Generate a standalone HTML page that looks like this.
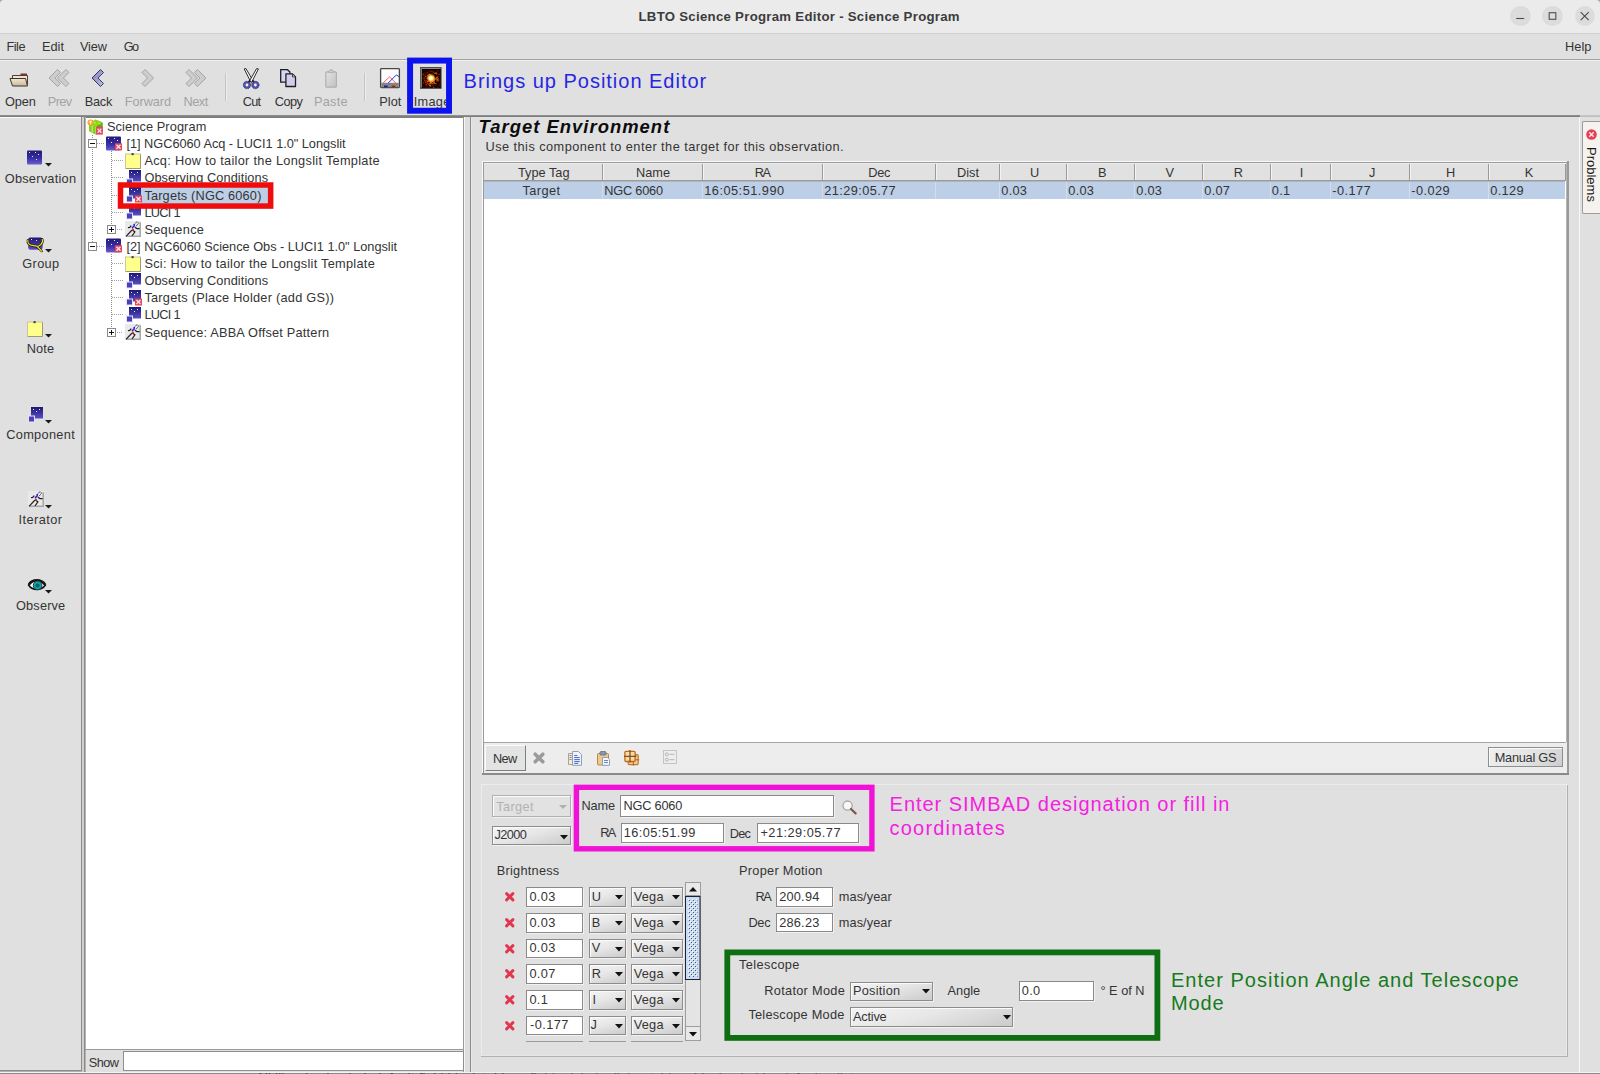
<!DOCTYPE html>
<html><head><meta charset="utf-8"><title>LBTO Science Program Editor - Science Program</title>
<style>
html,body{margin:0;padding:0;}
body{width:1600px;height:1074px;overflow:hidden;position:relative;background:#e0e0e0;font-family:"Liberation Sans",sans-serif;}
div,span.t,svg.i{position:absolute;box-sizing:border-box;}
span.t{white-space:pre;display:block;}
svg.i{overflow:visible;}
.fld{background:#fff;border:1px solid #8a8a8a;box-shadow:1px 1px 0 #f2f2f2;}
.cmb{border:1px solid #8c8c8c;background:linear-gradient(165deg,#f4f4f4,#e7e7e7 45%,#cbcbcb);box-shadow:1px 1px 0 #f2f2f2,inset 1px 1px 0 #fbfbfb;}
.btn{border:1px solid #8e8e8e;box-shadow:inset 1px 1px 0 #fafafa;background:linear-gradient(135deg,#efefef,#e4e4e4 55%,#cdcdcd);}
</style></head><body>
<div style="left:0px;top:0px;width:1600px;height:33px;background:#ebebeb;"></div>
<div style="left:0px;top:33px;width:1600px;height:1px;background:#d0d0d0;"></div>
<span class="t" style="left:638.50px;top:8.13px;font-size:13.2px;line-height:18px;letter-spacing:0.291px;color:#3c3c3c;font-weight:bold;">LBTO Science Program Editor - Science Program</span>
<div style="left:1510.0px;top:5.75px;width:20.5px;height:20.5px;border-radius:50%;background:#dcdcdc"></div>
<div style="left:1542.25px;top:5.75px;width:20.5px;height:20.5px;border-radius:50%;background:#dcdcdc"></div>
<div style="left:1574.5px;top:5.75px;width:20.5px;height:20.5px;border-radius:50%;background:#dcdcdc"></div>
<svg class="i" style="left:1510px;top:6px;" width="80" height="20" viewBox="0 0 80 20"><path d="M6.2 12.5h8" stroke="#4e4e4e" stroke-width="1.1"/>
<rect x="39.2" y="6.7" width="6.6" height="6.6" fill="none" stroke="#4e4e4e" stroke-width="1.1"/>
<path d="M70.7 6.2l8 8m0-8l-8 8" stroke="#4e4e4e" stroke-width="1.2"/></svg>
<svg class="i" style="left:0px;top:0px;" width="4" height="4" viewBox="0 0 4 4"><path d="M0 0h3.5A3.5 3.5 0 0 0 0 3.5z" fill="#9a9a98"/></svg>
<svg class="i" style="left:1596px;top:0px;" width="4" height="4" viewBox="0 0 4 4"><path d="M4 0h-3.5A3.5 3.5 0 0 1 4 3.5z" fill="#9a9a98"/></svg>
<div style="left:0px;top:34px;width:1600px;height:25px;background:#e0e0e0;"></div>
<div style="left:0px;top:59px;width:1600px;height:1px;background:#a2a2a2;"></div>
<div style="left:0px;top:60px;width:1600px;height:1px;background:#f0f0f0;"></div>
<span class="t" style="left:6.50px;top:38.28px;font-size:12.75px;line-height:18px;letter-spacing:-0.500px;color:#343434;">File</span>
<span class="t" style="left:42.00px;top:38.28px;font-size:12.75px;line-height:18px;letter-spacing:0.000px;color:#343434;">Edit</span>
<span class="t" style="left:80.00px;top:38.28px;font-size:12.75px;line-height:18px;letter-spacing:-0.167px;color:#343434;">View</span>
<span class="t" style="left:123.80px;top:38.28px;font-size:12.75px;line-height:18px;letter-spacing:-1.800px;color:#343434;">Go</span>
<span class="t" style="left:1565.00px;top:38.28px;font-size:12.75px;line-height:18px;letter-spacing:0.067px;color:#343434;">Help</span>
<svg class="i" style="left:8.6px;top:70.6px;" width="20" height="16" viewBox="0 0 20 16"><defs><linearGradient id="fo" x1="0" y1="0" x2="0" y2="1"><stop offset="0" stop-color="#f3e6d2"/><stop offset="1" stop-color="#cdb89a"/></linearGradient></defs>
<path d="M11.5 2.5h6.5v2h-6.5z" fill="#8e2b2b"/><path d="M3.5 4.5h15v9h-15z" fill="#efe4d2" stroke="#4a4038" stroke-width="1"/>
<path d="M1 7.5h15.5l2 7.5h-15z" fill="url(#fo)" stroke="#3c342c" stroke-width="1" stroke-linejoin="round"/></svg>
<svg class="i" style="left:48.1px;top:68.6px;" width="23" height="18" viewBox="0 0 23 18"><polygon points="9.5,0.5 12.5,3.5 7,9 12.5,14.5 9.5,17.5 1,9" fill="#cdcdcd" stroke="#a4a4a4" stroke-width="1" stroke-linejoin="miter"/><polygon points="17.9,0.5 20.9,3.5 15.4,9 20.9,14.5 17.9,17.5 9.4,9" fill="#cdcdcd" stroke="#a4a4a4" stroke-width="1" stroke-linejoin="miter"/></svg>
<svg class="i" style="left:90.9px;top:68.6px;" width="14" height="18" viewBox="0 0 14 18"><defs><linearGradient id="bk" x1="0" y1="0" x2="1" y2="1"><stop offset="0" stop-color="#7c7cba"/><stop offset="1" stop-color="#c0c0e6"/></linearGradient></defs><polygon points="9.5,0.5 12.5,3.5 7,9 12.5,14.5 9.5,17.5 1,9" fill="url(#bk)" stroke="#3a3a5c" stroke-width="1" stroke-linejoin="miter"/></svg>
<svg class="i" style="left:140.6px;top:68.6px;" width="14" height="18" viewBox="0 0 14 18"><polygon points="4.0,0.5 1.0,3.5 6.5,9 1.0,14.5 4.0,17.5 12.5,9" fill="#cdcdcd" stroke="#a4a4a4" stroke-width="1" stroke-linejoin="miter"/></svg>
<svg class="i" style="left:185.2px;top:68.6px;" width="23" height="18" viewBox="0 0 23 18"><polygon points="4.0,0.5 1.0,3.5 6.5,9 1.0,14.5 4.0,17.5 12.5,9" fill="#cdcdcd" stroke="#a4a4a4" stroke-width="1" stroke-linejoin="miter"/><polygon points="12.4,0.5 9.4,3.5 14.9,9 9.4,14.5 12.4,17.5 20.9,9" fill="#cdcdcd" stroke="#a4a4a4" stroke-width="1" stroke-linejoin="miter"/></svg>
<div style="left:225px;top:73px;width:1px;height:28px;background:#c4c4c4;"></div>
<div style="left:226px;top:73px;width:1px;height:28px;background:#ededed;"></div>
<svg class="i" style="left:243px;top:67.6px;" width="16.4" height="21" viewBox="0 0 16.4 21"><path d="M1.2 0.9L3 0.6L9.9 12.6L8 14.4z" fill="#fbfbfb" stroke="#161616" stroke-width="0.9" stroke-linejoin="round"/>
<path d="M15.4 0.9L13.6 0.6L6.7 12.6L8.6 14.4z" fill="#fbfbfb" stroke="#161616" stroke-width="0.9" stroke-linejoin="round"/>
<path d="M7.2 12.4L5.2 14.4M9.4 12.4L11.4 14.4" stroke="#161616" stroke-width="1.6"/>
<circle cx="4" cy="17" r="2.55" fill="#f2f2f6" stroke="#5252aa" stroke-width="2.3"/><circle cx="12.4" cy="17" r="2.55" fill="#f2f2f6" stroke="#5252aa" stroke-width="2.3"/>
<circle cx="4" cy="17" r="3.7" fill="none" stroke="#14143c" stroke-width="0.7" stroke-dasharray="1 0.8"/><circle cx="12.4" cy="17" r="3.7" fill="none" stroke="#14143c" stroke-width="0.7" stroke-dasharray="1 0.8"/></svg>
<svg class="i" style="left:280px;top:69px;" width="16" height="18.5" viewBox="0 0 16 18.5"><path d="M0.7 0.7h6.8l2.4 2.4v10h-9.2z" fill="#d7d7ee" stroke="#1e1e2a" stroke-width="1.3"/>
<path d="M5.9 4.9h6.6l3 3v9.6h-9.6z" fill="#cfcfea" stroke="#1e1e2a" stroke-width="1.3" stroke-linejoin="round"/><path d="M12.5 4.9v3h3z" fill="#f2f2fa" stroke="#1e1e2a" stroke-width="0.8"/></svg>
<svg class="i" style="left:325px;top:68px;" width="12" height="20" viewBox="0 0 12 20"><defs><linearGradient id="pg" x1="0" y1="0" x2="1" y2="1"><stop offset="0" stop-color="#e2e2e2"/><stop offset="1" stop-color="#c2c2c2"/></linearGradient></defs>
<rect x="0.8" y="3.8" width="10.6" height="15.4" rx="1" fill="url(#pg)" stroke="#b0b0b0" stroke-width="1.2"/>
<path d="M3 4.2c0-1.3 1.2-1.2 1.8-1.4 0-1.8 2.6-1.8 2.6 0 .6.2 1.8.1 1.8 1.4z" fill="#d8d8d8" stroke="#adadad" stroke-width="1"/></svg>
<div style="left:364px;top:73px;width:1px;height:28px;background:#c4c4c4;"></div>
<div style="left:365px;top:73px;width:1px;height:28px;background:#ededed;"></div>
<svg class="i" style="left:380px;top:68.1px;" width="20" height="20.2" viewBox="0 0 20 20.2"><rect x="0.6" y="0.6" width="18.8" height="19" rx="0.8" fill="#fdfdfd" stroke="#474747" stroke-width="1.3"/>
<rect x="1.2" y="14.8" width="17.6" height="4.4" fill="#858585"/>
<rect x="4" y="17.6" width="3.6" height="1.6" fill="#1414b4"/><rect x="11.8" y="17.6" width="3.4" height="1.6" fill="#c01414"/>
<path d="M3 15.2L9.5 8.8L16 15.2" stroke="#ff5a5a" stroke-width="1" fill="none"/>
<path d="M8 15.2L16.3 7L19 8.6" stroke="#2a2aff" stroke-width="1" fill="none"/></svg>
<svg class="i" style="left:420px;top:67.3px;" width="21.6" height="21.8" viewBox="0 0 21.6 21.8"><defs><radialGradient id="ig" cx="0.5" cy="0.5" r="0.5"><stop offset="0" stop-color="#ffffff"/><stop offset="0.35" stop-color="#fff4a8"/><stop offset="0.6" stop-color="#ffb020" stop-opacity="0.85"/><stop offset="1" stop-color="#c03806" stop-opacity="0"/></radialGradient></defs>
<rect x="0.5" y="0.5" width="20.6" height="20.8" fill="#100000" stroke="#4a4a4a" stroke-width="1"/><path d="M1.3 20.5V1.5H20.6" stroke="#8a8a8a" stroke-width="1.2" fill="none"/>
<rect x="9.9" y="12.2" width="1.1" height="1.1" fill="#fff"/><rect x="9.9" y="17.3" width="1.1" height="1.1" fill="#5a0c02"/><rect x="10.3" y="13.1" width="1.1" height="1.1" fill="#fff"/><rect x="7.3" y="4.1" width="1.1" height="1.1" fill="#2a0400"/><rect x="13.1" y="12.8" width="1.1" height="1.1" fill="#fff"/><rect x="13.4" y="13.1" width="1.1" height="1.1" fill="#ff9a18"/><rect x="16.6" y="3.6" width="1.1" height="1.1" fill="#3a0600"/><rect x="12.5" y="16.0" width="1.1" height="1.1" fill="#e84a08"/><rect x="16.7" y="11.5" width="1.1" height="1.1" fill="#e87a14"/><rect x="2.1" y="4.0" width="1.1" height="1.1" fill="#1a0200"/><rect x="19.5" y="19.7" width="1.1" height="1.1" fill="#2a0400"/><rect x="6.4" y="15.6" width="1.1" height="1.1" fill="#c83208"/><rect x="3.2" y="15.8" width="1.1" height="1.1" fill="#8a2006"/><rect x="8.8" y="19.1" width="1.1" height="1.1" fill="#6a1004"/><rect x="5.7" y="18.5" width="1.1" height="1.1" fill="#1a0200"/><rect x="19.2" y="9.4" width="1.1" height="1.1" fill="#2a0400"/><rect x="5.5" y="14.2" width="1.1" height="1.1" fill="#8a1a04"/><rect x="7.8" y="19.2" width="1.1" height="1.1" fill="#6a1004"/><rect x="4.4" y="14.7" width="1.1" height="1.1" fill="#1a0200"/><rect x="15.9" y="5.6" width="1.1" height="1.1" fill="#e87a14"/><rect x="10.9" y="19.5" width="1.1" height="1.1" fill="#1a0200"/><rect x="13.3" y="4.5" width="1.1" height="1.1" fill="#d84a0a"/><rect x="2.0" y="17.5" width="1.1" height="1.1" fill="#4a0802"/><rect x="7.3" y="17.8" width="1.1" height="1.1" fill="#1a0200"/><rect x="19.4" y="12.9" width="1.1" height="1.1" fill="#6a1004"/><rect x="19.3" y="6.2" width="1.1" height="1.1" fill="#4a0802"/><rect x="7.8" y="7.6" width="1.1" height="1.1" fill="#ff9a18"/><rect x="5.7" y="13.5" width="1.1" height="1.1" fill="#8a1a04"/><rect x="8.5" y="10.3" width="1.1" height="1.1" fill="#fff"/><rect x="16.6" y="4.8" width="1.1" height="1.1" fill="#2a0400"/><rect x="4.7" y="18.2" width="1.1" height="1.1" fill="#3a0600"/><rect x="14.7" y="5.2" width="1.1" height="1.1" fill="#5a0c02"/><rect x="5.4" y="18.9" width="1.1" height="1.1" fill="#4a0802"/><rect x="3.4" y="3.3" width="1.1" height="1.1" fill="#4a0802"/><rect x="18.8" y="6.6" width="1.1" height="1.1" fill="#8a2006"/><rect x="9.4" y="18.2" width="1.1" height="1.1" fill="#5a0c02"/><rect x="5.1" y="15.0" width="1.1" height="1.1" fill="#d84a0a"/><rect x="10.4" y="13.8" width="1.1" height="1.1" fill="#fff6b0"/><rect x="6.9" y="18.4" width="1.1" height="1.1" fill="#6a1004"/><rect x="3.2" y="9.6" width="1.1" height="1.1" fill="#6a1004"/><rect x="5.1" y="8.9" width="1.1" height="1.1" fill="#d84a0a"/><rect x="3.6" y="4.9" width="1.1" height="1.1" fill="#8a2006"/><rect x="13.5" y="14.5" width="1.1" height="1.1" fill="#ffb428"/><rect x="12.3" y="18.5" width="1.1" height="1.1" fill="#8a1a04"/><rect x="14.3" y="19.2" width="1.1" height="1.1" fill="#2a0400"/><rect x="3.3" y="3.7" width="1.1" height="1.1" fill="#3a0600"/><rect x="19.5" y="3.8" width="1.1" height="1.1" fill="#2a0400"/><rect x="2.8" y="18.7" width="1.1" height="1.1" fill="#3a0600"/><rect x="15.9" y="18.3" width="1.1" height="1.1" fill="#2a0400"/><rect x="10.3" y="3.8" width="1.1" height="1.1" fill="#c83208"/><rect x="17.1" y="12.4" width="1.1" height="1.1" fill="#e87a14"/><rect x="8.6" y="2.7" width="1.1" height="1.1" fill="#6a1004"/><rect x="13.2" y="19.7" width="1.1" height="1.1" fill="#b84a0c"/><rect x="7.8" y="18.7" width="1.1" height="1.1" fill="#1a0200"/><rect x="9.7" y="17.0" width="1.1" height="1.1" fill="#5a0c02"/><rect x="2.5" y="12.9" width="1.1" height="1.1" fill="#3a0600"/><rect x="18.8" y="4.5" width="1.1" height="1.1" fill="#2a0400"/><rect x="18.1" y="6.9" width="1.1" height="1.1" fill="#8a2006"/><rect x="4.5" y="13.1" width="1.1" height="1.1" fill="#8a1a04"/><rect x="13.5" y="10.1" width="1.1" height="1.1" fill="#ffd040"/><rect x="9.1" y="6.8" width="1.1" height="1.1" fill="#ffb428"/><rect x="17.4" y="9.2" width="1.1" height="1.1" fill="#8a1a04"/><rect x="5.7" y="4.8" width="1.1" height="1.1" fill="#6a1004"/><rect x="14.4" y="18.9" width="1.1" height="1.1" fill="#3a0600"/><rect x="4.0" y="10.7" width="1.1" height="1.1" fill="#e87a14"/><rect x="8.7" y="11.5" width="1.1" height="1.1" fill="#fff"/><rect x="7.6" y="16.8" width="1.1" height="1.1" fill="#5a0c02"/><rect x="2.7" y="14.8" width="1.1" height="1.1" fill="#8a2006"/><rect x="13.4" y="12.3" width="1.1" height="1.1" fill="#fff"/><rect x="10.0" y="2.9" width="1.1" height="1.1" fill="#3a0600"/><rect x="15.6" y="16.3" width="1.1" height="1.1" fill="#c83208"/><rect x="9.8" y="13.4" width="1.1" height="1.1" fill="#ffd040"/><rect x="18.8" y="14.3" width="1.1" height="1.1" fill="#1a0200"/><rect x="6.5" y="14.9" width="1.1" height="1.1" fill="#5a0c02"/><rect x="14.5" y="5.6" width="1.1" height="1.1" fill="#8a1a04"/><rect x="11.4" y="18.9" width="1.1" height="1.1" fill="#3a0600"/><rect x="8.9" y="16.2" width="1.1" height="1.1" fill="#c83208"/><rect x="9.2" y="17.9" width="1.1" height="1.1" fill="#e87a14"/><rect x="9.9" y="13.3" width="1.1" height="1.1" fill="#fff"/><rect x="11.6" y="13.8" width="1.1" height="1.1" fill="#ffd040"/><rect x="10.1" y="13.8" width="1.1" height="1.1" fill="#fff6b0"/><rect x="5.7" y="18.1" width="1.1" height="1.1" fill="#8a2006"/><rect x="11.4" y="16.2" width="1.1" height="1.1" fill="#ff9a18"/><rect x="8.1" y="3.9" width="1.1" height="1.1" fill="#4a0802"/><rect x="9.4" y="7.3" width="1.1" height="1.1" fill="#ffb428"/><rect x="16.2" y="3.6" width="1.1" height="1.1" fill="#3a0600"/><rect x="11.3" y="14.4" width="1.1" height="1.1" fill="#ffd040"/><rect x="4.6" y="11.4" width="1.1" height="1.1" fill="#7a1404"/><rect x="14.1" y="18.9" width="1.1" height="1.1" fill="#2a0400"/><rect x="3.5" y="6.3" width="1.1" height="1.1" fill="#8a2006"/><rect x="16.5" y="12.2" width="1.1" height="1.1" fill="#5a0c02"/><rect x="16.8" y="12.2" width="1.1" height="1.1" fill="#e87a14"/><rect x="18.7" y="17.6" width="1.1" height="1.1" fill="#8a2006"/><rect x="16.9" y="19.3" width="1.1" height="1.1" fill="#4a0802"/><rect x="10.7" y="9.6" width="1.1" height="1.1" fill="#fff6b0"/><rect x="12.6" y="3.0" width="1.1" height="1.1" fill="#4a0802"/><rect x="18.1" y="11.9" width="1.1" height="1.1" fill="#c83208"/><rect x="10.6" y="14.5" width="1.1" height="1.1" fill="#e84a08"/><rect x="10.0" y="18.4" width="1.1" height="1.1" fill="#e87a14"/><rect x="6.7" y="10.7" width="1.1" height="1.1" fill="#ffd040"/><rect x="17.8" y="18.7" width="1.1" height="1.1" fill="#4a0802"/><rect x="7.6" y="5.8" width="1.1" height="1.1" fill="#8a1a04"/><rect x="4.3" y="16.0" width="1.1" height="1.1" fill="#3a0600"/><rect x="4.7" y="2.7" width="1.1" height="1.1" fill="#2a0400"/><rect x="8.2" y="13.2" width="1.1" height="1.1" fill="#e84a08"/><rect x="4.1" y="11.3" width="1.1" height="1.1" fill="#d84a0a"/><rect x="14.3" y="17.7" width="1.1" height="1.1" fill="#7a1404"/><rect x="9.2" y="11.7" width="1.1" height="1.1" fill="#ffe060"/><rect x="17.1" y="11.7" width="1.1" height="1.1" fill="#d84a0a"/><rect x="16.9" y="13.1" width="1.1" height="1.1" fill="#d84a0a"/><rect x="18.0" y="13.4" width="1.1" height="1.1" fill="#d84a0a"/><rect x="7.5" y="7.9" width="1.1" height="1.1" fill="#ffb428"/><rect x="15.6" y="5.9" width="1.1" height="1.1" fill="#d84a0a"/><rect x="4.3" y="4.0" width="1.1" height="1.1" fill="#1a0200"/><rect x="16.6" y="9.8" width="1.1" height="1.1" fill="#d84a0a"/><rect x="5.5" y="13.4" width="1.1" height="1.1" fill="#c83208"/><rect x="5.5" y="14.3" width="1.1" height="1.1" fill="#8a1a04"/><rect x="4.0" y="11.2" width="1.1" height="1.1" fill="#5a0c02"/><rect x="19.5" y="16.9" width="1.1" height="1.1" fill="#1a0200"/><rect x="3.9" y="3.1" width="1.1" height="1.1" fill="#4a0802"/><rect x="17.8" y="10.8" width="1.1" height="1.1" fill="#c83208"/><rect x="5.6" y="17.0" width="1.1" height="1.1" fill="#b84a0c"/><rect x="3.7" y="3.6" width="1.1" height="1.1" fill="#1a0200"/><rect x="3.4" y="4.2" width="1.1" height="1.1" fill="#1a0200"/><rect x="11.0" y="9.9" width="1.1" height="1.1" fill="#fff6b0"/><rect x="13.1" y="3.2" width="1.1" height="1.1" fill="#1a0200"/><rect x="9.9" y="15.3" width="1.1" height="1.1" fill="#ffb428"/><rect x="12.6" y="4.1" width="1.1" height="1.1" fill="#8a1a04"/><rect x="17.6" y="16.4" width="1.1" height="1.1" fill="#2a0400"/><rect x="18.4" y="12.4" width="1.1" height="1.1" fill="#4a0802"/><rect x="19.2" y="16.4" width="1.1" height="1.1" fill="#6a1004"/><rect x="15.0" y="16.0" width="1.1" height="1.1" fill="#e87a14"/><rect x="4.3" y="8.2" width="1.1" height="1.1" fill="#8a1a04"/><rect x="15.4" y="15.7" width="1.1" height="1.1" fill="#7a1404"/><rect x="5.2" y="16.3" width="1.1" height="1.1" fill="#6a1004"/><rect x="2.2" y="8.7" width="1.1" height="1.1" fill="#4a0802"/><rect x="2.9" y="7.2" width="1.1" height="1.1" fill="#8a2006"/><rect x="7.9" y="13.9" width="1.1" height="1.1" fill="#e84a08"/><rect x="3.3" y="11.4" width="1.1" height="1.1" fill="#3a0600"/><rect x="14.3" y="15.7" width="1.1" height="1.1" fill="#c83208"/><rect x="4.0" y="4.4" width="1.1" height="1.1" fill="#1a0200"/><rect x="9.0" y="3.4" width="1.1" height="1.1" fill="#1a0200"/><rect x="2.2" y="7.0" width="1.1" height="1.1" fill="#8a2006"/><rect x="11.6" y="11.3" width="1.1" height="1.1" fill="#fff6b0"/><rect x="13.2" y="16.5" width="1.1" height="1.1" fill="#5a0c02"/><rect x="13.7" y="19.0" width="1.1" height="1.1" fill="#3a0600"/><rect x="8.8" y="19.3" width="1.1" height="1.1" fill="#4a0802"/><rect x="12.7" y="3.5" width="1.1" height="1.1" fill="#1a0200"/><rect x="7.0" y="9.4" width="1.1" height="1.1" fill="#e84a08"/><rect x="7.0" y="13.8" width="1.1" height="1.1" fill="#f06a10"/><rect x="13.6" y="15.4" width="1.1" height="1.1" fill="#ffb428"/><rect x="12.3" y="13.5" width="1.1" height="1.1" fill="#fff"/><rect x="2.9" y="8.0" width="1.1" height="1.1" fill="#4a0802"/><rect x="19.3" y="18.8" width="1.1" height="1.1" fill="#3a0600"/><rect x="9.5" y="10.8" width="1.1" height="1.1" fill="#ffe060"/><rect x="2.8" y="4.2" width="1.1" height="1.1" fill="#1a0200"/><rect x="4.5" y="19.1" width="1.1" height="1.1" fill="#2a0400"/><rect x="4.0" y="13.3" width="1.1" height="1.1" fill="#d84a0a"/><rect x="17.1" y="8.7" width="1.1" height="1.1" fill="#8a1a04"/><rect x="9.8" y="14.1" width="1.1" height="1.1" fill="#f06a10"/><rect x="13.2" y="14.3" width="1.1" height="1.1" fill="#e84a08"/><rect x="16.3" y="4.9" width="1.1" height="1.1" fill="#3a0600"/><rect x="6.2" y="4.5" width="1.1" height="1.1" fill="#4a0802"/><rect x="12.9" y="8.7" width="1.1" height="1.1" fill="#e84a08"/><rect x="14.2" y="5.8" width="1.1" height="1.1" fill="#d84a0a"/><rect x="5.3" y="6.8" width="1.1" height="1.1" fill="#d84a0a"/><rect x="17.4" y="3.2" width="1.1" height="1.1" fill="#8a2006"/><rect x="6.5" y="3.0" width="1.1" height="1.1" fill="#3a0600"/><rect x="11.5" y="3.8" width="1.1" height="1.1" fill="#7a1404"/><rect x="4.8" y="6.6" width="1.1" height="1.1" fill="#1a0200"/><rect x="10.4" y="6.1" width="1.1" height="1.1" fill="#7a1404"/><rect x="4.3" y="17.5" width="1.1" height="1.1" fill="#1a0200"/><rect x="16.2" y="13.3" width="1.1" height="1.1" fill="#d84a0a"/><rect x="9.8" y="15.4" width="1.1" height="1.1" fill="#ffb428"/><rect x="8.5" y="13.8" width="1.1" height="1.1" fill="#f06a10"/><rect x="7.1" y="15.6" width="1.1" height="1.1" fill="#d84a0a"/><rect x="9.5" y="8.9" width="1.1" height="1.1" fill="#ffd040"/><rect x="3.4" y="3.9" width="1.1" height="1.1" fill="#1a0200"/><rect x="16.3" y="10.5" width="1.1" height="1.1" fill="#c83208"/><rect x="3.3" y="6.2" width="1.1" height="1.1" fill="#6a1004"/><rect x="14.2" y="11.1" width="1.1" height="1.1" fill="#f06a10"/><rect x="7.0" y="5.0" width="1.1" height="1.1" fill="#7a1404"/><rect x="7.7" y="18.2" width="1.1" height="1.1" fill="#1a0200"/><rect x="12.0" y="18.4" width="1.1" height="1.1" fill="#8a1a04"/><rect x="9.7" y="16.4" width="1.1" height="1.1" fill="#8a1a04"/><rect x="5.9" y="19.2" width="1.1" height="1.1" fill="#4a0802"/><rect x="6.3" y="8.8" width="1.1" height="1.1" fill="#8a1a04"/><rect x="13.8" y="12.6" width="1.1" height="1.1" fill="#e84a08"/><rect x="8.4" y="9.3" width="1.1" height="1.1" fill="#e84a08"/><rect x="11.8" y="5.6" width="1.1" height="1.1" fill="#8a1a04"/><rect x="16.2" y="6.3" width="1.1" height="1.1" fill="#d84a0a"/><rect x="11.9" y="19.2" width="1.1" height="1.1" fill="#1a0200"/><rect x="3.1" y="12.0" width="1.1" height="1.1" fill="#6a1004"/><rect x="7.9" y="7.2" width="1.1" height="1.1" fill="#8a1a04"/><rect x="3.5" y="13.5" width="1.1" height="1.1" fill="#2a0400"/><rect x="16.3" y="9.8" width="1.1" height="1.1" fill="#e87a14"/><rect x="15.4" y="11.5" width="1.1" height="1.1" fill="#ffd040"/><rect x="8.1" y="16.5" width="1.1" height="1.1" fill="#d84a0a"/><rect x="10.6" y="11.8" width="1.1" height="1.1" fill="#fff6b0"/><rect x="9.2" y="16.8" width="1.1" height="1.1" fill="#c83208"/><rect x="16.1" y="16.9" width="1.1" height="1.1" fill="#4a0802"/><rect x="13.2" y="11.6" width="1.1" height="1.1" fill="#fff6b0"/><rect x="9.4" y="9.8" width="1.1" height="1.1" fill="#ffe060"/><rect x="19.3" y="9.0" width="1.1" height="1.1" fill="#3a0600"/><rect x="8.8" y="11.7" width="1.1" height="1.1" fill="#fff6b0"/><rect x="10.3" y="15.1" width="1.1" height="1.1" fill="#ffb428"/><rect x="15.6" y="5.6" width="1.1" height="1.1" fill="#e87a14"/><rect x="2.3" y="10.8" width="1.1" height="1.1" fill="#8a2006"/><rect x="3.9" y="5.7" width="1.1" height="1.1" fill="#3a0600"/><rect x="12.5" y="10.7" width="1.1" height="1.1" fill="#fff"/><circle cx="11" cy="11.2" r="5" fill="url(#ig)"/></svg>
<span class="t" style="left:5.00px;top:92.68px;font-size:12.75px;line-height:18px;letter-spacing:-0.133px;color:#343434;">Open</span>
<span class="t" style="left:47.80px;top:92.68px;font-size:12.75px;line-height:18px;letter-spacing:-0.600px;color:#a3a3a3;">Prev</span>
<span class="t" style="left:84.80px;top:92.68px;font-size:12.75px;line-height:18px;letter-spacing:-0.267px;color:#343434;">Back</span>
<span class="t" style="left:124.80px;top:92.68px;font-size:12.75px;line-height:18px;letter-spacing:-0.083px;color:#a3a3a3;">Forward</span>
<span class="t" style="left:183.50px;top:92.68px;font-size:12.75px;line-height:18px;letter-spacing:-0.500px;color:#a3a3a3;">Next</span>
<span class="t" style="left:242.80px;top:92.68px;font-size:12.75px;line-height:18px;letter-spacing:-0.750px;color:#343434;">Cut</span>
<span class="t" style="left:274.80px;top:92.68px;font-size:12.75px;line-height:18px;letter-spacing:-0.600px;color:#343434;">Copy</span>
<span class="t" style="left:314.00px;top:92.68px;font-size:12.75px;line-height:18px;letter-spacing:0.250px;color:#a3a3a3;">Paste</span>
<span class="t" style="left:379.30px;top:92.68px;font-size:12.75px;line-height:18px;letter-spacing:0.000px;color:#343434;">Plot</span>
<div style="left:412px;top:90px;width:34px;height:20px;overflow:hidden">
<span class="t" style="left:1.80px;top:2.68px;font-size:12.75px;line-height:18px;letter-spacing:0.250px;color:#343434;">Image</span>
</div>
<svg class="i" style="left:406px;top:56px;" width="49" height="60" viewBox="0 0 49 60"><rect x="4.08" y="4.58" width="38.95" height="50.15" fill="none" stroke="#0c14ee" stroke-width="5.95"/></svg>
<span class="t" style="left:463.60px;top:67.27px;font-size:20px;line-height:28px;letter-spacing:0.983px;color:#2626e2;">Brings up Position Editor</span>
<div style="left:0px;top:115px;width:1600px;height:1px;background:#8e8e8e;"></div>
<div style="left:0px;top:116px;width:1600px;height:1px;background:#7e7e7e;"></div>
<div style="left:1580px;top:115px;width:20px;height:1px;background:#c6c6c6;"></div>
<div style="left:1580px;top:116px;width:20px;height:1px;background:#c0c0c0;"></div>
<div style="left:0px;top:117px;width:81px;height:1px;background:#fafafa;"></div>
<div style="left:81px;top:117px;width:1px;height:954px;background:#8c8c8c;"></div>
<div style="left:82px;top:117px;width:2px;height:955px;background:#cfcfcf;"></div>
<svg class="i" style="left:27.2px;top:150px;" width="15" height="15" viewBox="0 0 15 15"><defs><linearGradient id="og" x1="0" y1="0" x2="0" y2="1"><stop offset="0" stop-color="#1e1a78"/><stop offset="0.55" stop-color="#3a2ea4"/><stop offset="1" stop-color="#6a5ed0"/></linearGradient></defs><rect x="0" y="0.4" width="15" height="14.2" rx="1" fill="url(#og)"/><rect x="2" y="2" width="1" height="1" fill="#e8e8ff"/><rect x="8" y="2" width="1" height="1" fill="#e8e8ff"/><rect x="5" y="6" width="1" height="1" fill="#e8e8ff"/><rect x="11" y="4" width="1" height="1" fill="#e8e8ff"/><rect x="9" y="9" width="1" height="1" fill="#e8e8ff"/></svg>
<svg class="i" style="left:45px;top:163.3px;" width="7" height="4" viewBox="0 0 7 4"><path d="M0 0h7l-3.5 3.5z" fill="#1a1a1a"/></svg>
<span class="t" style="left:4.73px;top:169.58px;font-size:12.75px;line-height:18px;letter-spacing:0.254px;color:#343434;">Observation</span>
<svg class="i" style="left:27.1px;top:236.6px;" width="17" height="15" viewBox="0 0 17 15"><defs><linearGradient id="cg" x1="0" y1="0" x2="0" y2="1"><stop offset="0" stop-color="#1c1874"/><stop offset="1" stop-color="#5a4ec4"/></linearGradient></defs><rect x="1.2" y="0.6" width="14.4" height="12.2" rx="2.2" fill="url(#cg)"/><rect x="4" y="2" width="1" height="1" fill="#e8e8ff"/><rect x="9" y="3" width="1" height="1" fill="#e8e8ff"/>
<path d="M0.9 3.2C0.2 6.4 2.6 8.2 5.6 8.4C8.4 8.6 10.2 10.4 12.6 8.6C14.8 7 16 4.6 15.2 2.4M10.4 9.6L14.6 14" stroke="#15150a" stroke-width="2.5" fill="none" stroke-linecap="round"/>
<path d="M0.9 3.2C0.2 6.4 2.6 8.2 5.6 8.4C8.4 8.6 10.2 10.4 12.6 8.6C14.8 7 16 4.6 15.2 2.4M10.4 9.6L14.6 14" stroke="#f4e21a" stroke-width="1.2" fill="none" stroke-linecap="round"/></svg>
<svg class="i" style="left:45px;top:248.7px;" width="7" height="4" viewBox="0 0 7 4"><path d="M0 0h7l-3.5 3.5z" fill="#1a1a1a"/></svg>
<span class="t" style="left:22.37px;top:254.98px;font-size:12.75px;line-height:18px;letter-spacing:0.315px;color:#343434;">Group</span>
<svg class="i" style="left:27px;top:320.5px;" width="16" height="16" viewBox="0 0 16 16"><rect x="0.5" y="1" width="15" height="14.5" fill="#ffff8c" stroke="#c8c89a" stroke-width="1"/><path d="M1 15.5h14.5v-14" stroke="#9c9c78" stroke-width="1" fill="none"/><rect x="6.3" y="0" width="2.6" height="2.2" rx="1" fill="#4a4a4a"/></svg>
<svg class="i" style="left:45px;top:334.1px;" width="7" height="4" viewBox="0 0 7 4"><path d="M0 0h7l-3.5 3.5z" fill="#1a1a1a"/></svg>
<span class="t" style="left:26.78px;top:340.38px;font-size:12.75px;line-height:18px;letter-spacing:0.147px;color:#343434;">Note</span>
<svg class="i" style="left:27.8px;top:406.5px;" width="15" height="15" viewBox="0 0 15 15"><defs><linearGradient id="cg" x1="0" y1="0" x2="0" y2="1"><stop offset="0" stop-color="#1c1874"/><stop offset="1" stop-color="#5a4ec4"/></linearGradient></defs><rect x="3" y="0" width="12" height="11.5" fill="url(#cg)"/><rect x="0.5" y="9" width="6" height="6" fill="#4a40bc" stroke="#e4e4f2" stroke-width="1"/><rect x="5" y="2" width="1" height="1" fill="#e8e8ff"/><rect x="11" y="2" width="1" height="1" fill="#e8e8ff"/><rect x="8" y="4" width="1" height="1" fill="#e8e8ff"/></svg>
<svg class="i" style="left:45px;top:419.5px;" width="7" height="4" viewBox="0 0 7 4"><path d="M0 0h7l-3.5 3.5z" fill="#1a1a1a"/></svg>
<span class="t" style="left:6.20px;top:425.78px;font-size:12.75px;line-height:18px;letter-spacing:0.325px;color:#343434;">Component</span>
<svg class="i" style="left:27.5px;top:491.2px;" width="16" height="16" viewBox="0 0 16 16"><rect x="0" y="0" width="16" height="16" fill="#e9e9e9"/><path d="M15.2 1.2V15.2H1.4" stroke="#a6a6a6" stroke-width="1.5" fill="none"/>
<path d="M1 15.4L6.8 9.2M7 15L9.9 10.9L7.3 8.8" stroke="#262626" stroke-width="1.25" fill="none"/>
<path d="M9.8 6.2L12 7.6H14.6M3 6.7L4.7 6.4L6.3 4.6" stroke="#1c1c1c" stroke-width="1.2" fill="none"/>
<path d="M9.6 2.7L12 0.7L13.7 2.1L11 5.3" stroke="#3a3a3a" stroke-width="1" fill="none" stroke-dasharray="1.4 0.6"/>
<path d="M9.2 3.1V5L7 6.9" stroke="#1a1aff" stroke-width="1.5" fill="none"/><path d="M7 7.6L8.7 9.1" stroke="#ff2828" stroke-width="1.5"/></svg>
<svg class="i" style="left:45px;top:504.8px;" width="7" height="4" viewBox="0 0 7 4"><path d="M0 0h7l-3.5 3.5z" fill="#1a1a1a"/></svg>
<span class="t" style="left:18.45px;top:511.08px;font-size:12.75px;line-height:18px;letter-spacing:0.443px;color:#343434;">Iterator</span>
<svg class="i" style="left:28px;top:577.5px;" width="18" height="14" viewBox="0 0 18 14"><path d="M0.6 7C4 1.2 13.5 1 17.4 7C13.5 13 4 12.8 0.6 7z" fill="#fafafa" stroke="#141414" stroke-width="1.6"/>
<path d="M1 6.4C4.5 1 13 1 17 6.4" stroke="#141414" stroke-width="2.6" fill="none"/>
<circle cx="9.6" cy="7.4" r="4.3" fill="#14a0a4" stroke="#0c4c50" stroke-width="1"/><circle cx="9.6" cy="7.4" r="2" fill="#0c5c60"/></svg>
<svg class="i" style="left:45px;top:590.4px;" width="7" height="4" viewBox="0 0 7 4"><path d="M0 0h7l-3.5 3.5z" fill="#1a1a1a"/></svg>
<span class="t" style="left:16.00px;top:596.68px;font-size:12.75px;line-height:18px;letter-spacing:0.167px;color:#343434;">Observe</span>
<div style="left:84px;top:117px;width:1px;height:955px;background:#8a8a8a;"></div>
<div style="left:85px;top:117px;width:1px;height:955px;background:#b4b4b4;"></div>
<div style="left:86px;top:117px;width:377px;height:932px;background:#ffffff;"></div>
<div style="left:86px;top:117px;width:378px;height:1px;background:#7e7e7e;"></div>
<div style="left:463px;top:117px;width:1px;height:955px;background:#9a9a9a;"></div>
<div style="left:85px;top:1049px;width:379px;height:1px;background:#9a9a9a;"></div>
<span class="t" style="left:88.80px;top:1053.88px;font-size:12.75px;line-height:18px;letter-spacing:-0.600px;color:#343434;">Show</span>
<div style="left:123px;top:1051px;width:340.5px;height:20px;background:#ffffff;border:1px solid #8e8e8e;"></div>
<div style="left:0px;top:1070px;width:82px;height:1px;background:#8c8c8c;"></div>
<div style="left:0px;top:1071px;width:82px;height:1px;background:#b0b0b0;"></div>
<div style="left:0px;top:1072px;width:1600px;height:1px;background:#f4f4f4;"></div>
<div style="left:0px;top:1073px;width:1600px;height:1px;background:#8a8a8a;"></div>
<div style="left:92px;top:135px;width:1px;height:111px;background:repeating-linear-gradient(#8c8c8c 0 1px,transparent 1px 2px);"></div>
<div style="left:111px;top:151px;width:1px;height:79px;background:repeating-linear-gradient(#8c8c8c 0 1px,transparent 1px 2px);"></div>
<div style="left:111px;top:254px;width:1px;height:78px;background:repeating-linear-gradient(#8c8c8c 0 1px,transparent 1px 2px);"></div>
<div style="left:141px;top:186.5px;width:127px;height:17px;background:#bccfe6;"></div>
<svg class="i" style="left:87px;top:118.5px;" width="16" height="16" viewBox="0 0 16 16"><defs><linearGradient id="pgc" x1="0" y1="0" x2="1" y2="1"><stop offset="0" stop-color="#b8ee40"/><stop offset="1" stop-color="#4a9c08"/></linearGradient></defs>
<path d="M2 4.5L8.5 0.6L15.5 3.6V11.5L9 15.5L2 12z" fill="url(#pgc)"/>
<path d="M2 4.5L8.5 0.6L15.5 3.6L9.2 7.4z" fill="#8ed818"/><path d="M9.2 7.4L15.5 3.6V11.5L9 15.5z" fill="#5cb00e"/><path d="M2 4.5L9.2 7.4L9 15.5L2 12z" fill="#84d020"/>
<path d="M5.2 6.5v6.5M9.1 7.6v7" stroke="#d4f49c" stroke-width="0.9"/><path d="M11 4l2.5 1.2M6 3l3 1.3" stroke="#c8f080" stroke-width="0.8"/>
<circle cx="3.6" cy="3.5" r="3.1" fill="#f4a41a"/><circle cx="3.4" cy="3.2" r="1.9" fill="#f8bc3c"/><path d="M2.3 2.4h2.6M3.6 2.4v2.9" stroke="#fff6d8" stroke-width="1"/><rect x="9.1" y="7.7" width="6.8" height="7.9" fill="#e2465a"/><path d="M10.6 9.6l3.8 4.2m0-4.2l-3.8 4.2" stroke="#fbe6ea" stroke-width="1.3"/></svg>
<span class="t" style="left:107.00px;top:118.08px;font-size:12.75px;line-height:18px;letter-spacing:0.107px;color:#343434;">Science Program</span>
<div style="left:97px;top:143.125px;width:8px;height:1px;background:repeating-linear-gradient(90deg,#a2a2a2 0 1px,transparent 1px 2px);"></div>
<svg class="i" style="left:106px;top:135.625px;" width="16" height="16" viewBox="0 0 16 16"><defs><linearGradient id="og" x1="0" y1="0" x2="0" y2="1"><stop offset="0" stop-color="#1e1a78"/><stop offset="0.55" stop-color="#3a2ea4"/><stop offset="1" stop-color="#6a5ed0"/></linearGradient></defs><rect x="0" y="0.4" width="15" height="14.2" rx="1" fill="url(#og)"/><rect x="2" y="2" width="1" height="1" fill="#e8e8ff"/><rect x="8" y="2" width="1" height="1" fill="#e8e8ff"/><rect x="5" y="6" width="1" height="1" fill="#e8e8ff"/><rect x="11" y="4" width="1" height="1" fill="#e8e8ff"/><rect x="9" y="9" width="1" height="1" fill="#e8e8ff"/><rect x="9" y="7.3" width="7" height="7" fill="#e2465a"/><path d="M10.5 8.8l4 4m0-4l-4 4" stroke="#fbe6ea" stroke-width="1.3"/></svg>
<span class="t" style="left:126.50px;top:135.21px;font-size:12.75px;line-height:18px;letter-spacing:-0.025px;color:#343434;">[1] NGC6060 Acq - LUCI1 1.0&quot; Longslit</span>
<div style="left:112px;top:160.25px;width:11px;height:1px;background:repeating-linear-gradient(90deg,#a2a2a2 0 1px,transparent 1px 2px);"></div>
<svg class="i" style="left:125px;top:152.75px;" width="16" height="16" viewBox="0 0 16 16"><rect x="0.5" y="1" width="15" height="14.5" fill="#ffff8c" stroke="#c8c89a" stroke-width="1"/><path d="M1 15.5h14.5v-14" stroke="#9c9c78" stroke-width="1" fill="none"/><rect x="6.3" y="0" width="2.6" height="2.2" rx="1" fill="#4a4a4a"/></svg>
<span class="t" style="left:144.40px;top:152.33px;font-size:12.75px;line-height:18px;letter-spacing:0.297px;color:#343434;">Acq: How to tailor the Longslit Template</span>
<div style="left:112px;top:177.375px;width:11px;height:1px;background:repeating-linear-gradient(90deg,#a2a2a2 0 1px,transparent 1px 2px);"></div>
<svg class="i" style="left:125.5px;top:169.875px;" width="16" height="16" viewBox="0 0 16 16"><defs><linearGradient id="cg" x1="0" y1="0" x2="0" y2="1"><stop offset="0" stop-color="#1c1874"/><stop offset="1" stop-color="#5a4ec4"/></linearGradient></defs><rect x="3" y="0" width="12" height="11.5" fill="url(#cg)"/><rect x="0.5" y="9" width="6" height="6" fill="#4a40bc" stroke="#e4e4f2" stroke-width="1"/><rect x="5" y="2" width="1" height="1" fill="#e8e8ff"/><rect x="11" y="2" width="1" height="1" fill="#e8e8ff"/><rect x="8" y="4" width="1" height="1" fill="#e8e8ff"/></svg>
<span class="t" style="left:144.40px;top:169.46px;font-size:12.75px;line-height:18px;letter-spacing:0.095px;color:#343434;">Observing Conditions</span>
<div style="left:112px;top:194.5px;width:11px;height:1px;background:repeating-linear-gradient(90deg,#a2a2a2 0 1px,transparent 1px 2px);"></div>
<svg class="i" style="left:125.5px;top:187.0px;" width="16" height="16" viewBox="0 0 16 16"><defs><linearGradient id="cg" x1="0" y1="0" x2="0" y2="1"><stop offset="0" stop-color="#1c1874"/><stop offset="1" stop-color="#5a4ec4"/></linearGradient></defs><rect x="3" y="0" width="12" height="11.5" fill="url(#cg)"/><rect x="0.5" y="9" width="6" height="6" fill="#4a40bc" stroke="#e4e4f2" stroke-width="1"/><rect x="5" y="2" width="1" height="1" fill="#e8e8ff"/><rect x="11" y="2" width="1" height="1" fill="#e8e8ff"/><rect x="8" y="4" width="1" height="1" fill="#e8e8ff"/><rect x="9" y="8.5" width="7" height="7" fill="#e2465a"/><path d="M10.5 10.0l4 4m0-4l-4 4" stroke="#fbe6ea" stroke-width="1.3"/></svg>
<span class="t" style="left:144.40px;top:186.58px;font-size:12.75px;line-height:18px;letter-spacing:0.171px;color:#343434;">Targets (NGC 6060)</span>
<div style="left:112px;top:211.625px;width:11px;height:1px;background:repeating-linear-gradient(90deg,#a2a2a2 0 1px,transparent 1px 2px);"></div>
<svg class="i" style="left:125.5px;top:204.125px;" width="16" height="16" viewBox="0 0 16 16"><defs><linearGradient id="cg" x1="0" y1="0" x2="0" y2="1"><stop offset="0" stop-color="#1c1874"/><stop offset="1" stop-color="#5a4ec4"/></linearGradient></defs><rect x="3" y="0" width="12" height="11.5" fill="url(#cg)"/><rect x="0.5" y="9" width="6" height="6" fill="#4a40bc" stroke="#e4e4f2" stroke-width="1"/><rect x="5" y="2" width="1" height="1" fill="#e8e8ff"/><rect x="11" y="2" width="1" height="1" fill="#e8e8ff"/><rect x="8" y="4" width="1" height="1" fill="#e8e8ff"/></svg>
<span class="t" style="left:144.40px;top:203.71px;font-size:12.75px;line-height:18px;letter-spacing:-0.680px;color:#343434;">LUCI 1</span>
<div style="left:117px;top:228.75px;width:6px;height:1px;background:repeating-linear-gradient(90deg,#a2a2a2 0 1px,transparent 1px 2px);"></div>
<svg class="i" style="left:125px;top:221.25px;" width="16" height="16" viewBox="0 0 16 16"><rect x="0" y="0" width="16" height="16" fill="#e9e9e9"/><path d="M15.2 1.2V15.2H1.4" stroke="#a6a6a6" stroke-width="1.5" fill="none"/>
<path d="M1 15.4L6.8 9.2M7 15L9.9 10.9L7.3 8.8" stroke="#262626" stroke-width="1.25" fill="none"/>
<path d="M9.8 6.2L12 7.6H14.6M3 6.7L4.7 6.4L6.3 4.6" stroke="#1c1c1c" stroke-width="1.2" fill="none"/>
<path d="M9.6 2.7L12 0.7L13.7 2.1L11 5.3" stroke="#3a3a3a" stroke-width="1" fill="none" stroke-dasharray="1.4 0.6"/>
<path d="M9.2 3.1V5L7 6.9" stroke="#1a1aff" stroke-width="1.5" fill="none"/><path d="M7 7.6L8.7 9.1" stroke="#ff2828" stroke-width="1.5"/></svg>
<span class="t" style="left:144.40px;top:220.83px;font-size:12.75px;line-height:18px;letter-spacing:0.300px;color:#343434;">Sequence</span>
<div style="left:97px;top:245.875px;width:8px;height:1px;background:repeating-linear-gradient(90deg,#a2a2a2 0 1px,transparent 1px 2px);"></div>
<svg class="i" style="left:106px;top:238.375px;" width="16" height="16" viewBox="0 0 16 16"><defs><linearGradient id="og" x1="0" y1="0" x2="0" y2="1"><stop offset="0" stop-color="#1e1a78"/><stop offset="0.55" stop-color="#3a2ea4"/><stop offset="1" stop-color="#6a5ed0"/></linearGradient></defs><rect x="0" y="0.4" width="15" height="14.2" rx="1" fill="url(#og)"/><rect x="2" y="2" width="1" height="1" fill="#e8e8ff"/><rect x="8" y="2" width="1" height="1" fill="#e8e8ff"/><rect x="5" y="6" width="1" height="1" fill="#e8e8ff"/><rect x="11" y="4" width="1" height="1" fill="#e8e8ff"/><rect x="9" y="9" width="1" height="1" fill="#e8e8ff"/><rect x="9" y="7.3" width="7" height="7" fill="#e2465a"/><path d="M10.5 8.8l4 4m0-4l-4 4" stroke="#fbe6ea" stroke-width="1.3"/></svg>
<span class="t" style="left:126.50px;top:237.96px;font-size:12.75px;line-height:18px;letter-spacing:-0.011px;color:#343434;">[2] NGC6060 Science Obs - LUCI1 1.0&quot; Longslit</span>
<div style="left:112px;top:263.0px;width:11px;height:1px;background:repeating-linear-gradient(90deg,#a2a2a2 0 1px,transparent 1px 2px);"></div>
<svg class="i" style="left:125px;top:255.5px;" width="16" height="16" viewBox="0 0 16 16"><rect x="0.5" y="1" width="15" height="14.5" fill="#ffff8c" stroke="#c8c89a" stroke-width="1"/><path d="M1 15.5h14.5v-14" stroke="#9c9c78" stroke-width="1" fill="none"/><rect x="6.3" y="0" width="2.6" height="2.2" rx="1" fill="#4a4a4a"/></svg>
<span class="t" style="left:144.40px;top:255.08px;font-size:12.75px;line-height:18px;letter-spacing:0.279px;color:#343434;">Sci: How to tailor the Longslit Template</span>
<div style="left:112px;top:280.125px;width:11px;height:1px;background:repeating-linear-gradient(90deg,#a2a2a2 0 1px,transparent 1px 2px);"></div>
<svg class="i" style="left:125.5px;top:272.625px;" width="16" height="16" viewBox="0 0 16 16"><defs><linearGradient id="cg" x1="0" y1="0" x2="0" y2="1"><stop offset="0" stop-color="#1c1874"/><stop offset="1" stop-color="#5a4ec4"/></linearGradient></defs><rect x="3" y="0" width="12" height="11.5" fill="url(#cg)"/><rect x="0.5" y="9" width="6" height="6" fill="#4a40bc" stroke="#e4e4f2" stroke-width="1"/><rect x="5" y="2" width="1" height="1" fill="#e8e8ff"/><rect x="11" y="2" width="1" height="1" fill="#e8e8ff"/><rect x="8" y="4" width="1" height="1" fill="#e8e8ff"/></svg>
<span class="t" style="left:144.40px;top:272.21px;font-size:12.75px;line-height:18px;letter-spacing:0.095px;color:#343434;">Observing Conditions</span>
<div style="left:112px;top:297.25px;width:11px;height:1px;background:repeating-linear-gradient(90deg,#a2a2a2 0 1px,transparent 1px 2px);"></div>
<svg class="i" style="left:125.5px;top:289.75px;" width="16" height="16" viewBox="0 0 16 16"><defs><linearGradient id="cg" x1="0" y1="0" x2="0" y2="1"><stop offset="0" stop-color="#1c1874"/><stop offset="1" stop-color="#5a4ec4"/></linearGradient></defs><rect x="3" y="0" width="12" height="11.5" fill="url(#cg)"/><rect x="0.5" y="9" width="6" height="6" fill="#4a40bc" stroke="#e4e4f2" stroke-width="1"/><rect x="5" y="2" width="1" height="1" fill="#e8e8ff"/><rect x="11" y="2" width="1" height="1" fill="#e8e8ff"/><rect x="8" y="4" width="1" height="1" fill="#e8e8ff"/><rect x="9" y="8.5" width="7" height="7" fill="#e2465a"/><path d="M10.5 10.0l4 4m0-4l-4 4" stroke="#fbe6ea" stroke-width="1.3"/></svg>
<span class="t" style="left:144.40px;top:289.33px;font-size:12.75px;line-height:18px;letter-spacing:0.247px;color:#343434;">Targets (Place Holder (add GS))</span>
<div style="left:112px;top:314.375px;width:11px;height:1px;background:repeating-linear-gradient(90deg,#a2a2a2 0 1px,transparent 1px 2px);"></div>
<svg class="i" style="left:125.5px;top:306.875px;" width="16" height="16" viewBox="0 0 16 16"><defs><linearGradient id="cg" x1="0" y1="0" x2="0" y2="1"><stop offset="0" stop-color="#1c1874"/><stop offset="1" stop-color="#5a4ec4"/></linearGradient></defs><rect x="3" y="0" width="12" height="11.5" fill="url(#cg)"/><rect x="0.5" y="9" width="6" height="6" fill="#4a40bc" stroke="#e4e4f2" stroke-width="1"/><rect x="5" y="2" width="1" height="1" fill="#e8e8ff"/><rect x="11" y="2" width="1" height="1" fill="#e8e8ff"/><rect x="8" y="4" width="1" height="1" fill="#e8e8ff"/></svg>
<span class="t" style="left:144.40px;top:306.46px;font-size:12.75px;line-height:18px;letter-spacing:-0.680px;color:#343434;">LUCI 1</span>
<div style="left:117px;top:331.5px;width:6px;height:1px;background:repeating-linear-gradient(90deg,#a2a2a2 0 1px,transparent 1px 2px);"></div>
<svg class="i" style="left:125px;top:324.0px;" width="16" height="16" viewBox="0 0 16 16"><rect x="0" y="0" width="16" height="16" fill="#e9e9e9"/><path d="M15.2 1.2V15.2H1.4" stroke="#a6a6a6" stroke-width="1.5" fill="none"/>
<path d="M1 15.4L6.8 9.2M7 15L9.9 10.9L7.3 8.8" stroke="#262626" stroke-width="1.25" fill="none"/>
<path d="M9.8 6.2L12 7.6H14.6M3 6.7L4.7 6.4L6.3 4.6" stroke="#1c1c1c" stroke-width="1.2" fill="none"/>
<path d="M9.6 2.7L12 0.7L13.7 2.1L11 5.3" stroke="#3a3a3a" stroke-width="1" fill="none" stroke-dasharray="1.4 0.6"/>
<path d="M9.2 3.1V5L7 6.9" stroke="#1a1aff" stroke-width="1.5" fill="none"/><path d="M7 7.6L8.7 9.1" stroke="#ff2828" stroke-width="1.5"/></svg>
<span class="t" style="left:144.40px;top:323.58px;font-size:12.75px;line-height:18px;letter-spacing:0.204px;color:#343434;">Sequence: ABBA Offset Pattern</span>
<svg class="i" style="left:88px;top:139.125px;" width="9" height="9" viewBox="0 0 9 9"><rect x="0.5" y="0.5" width="8" height="8" fill="#fff" stroke="#8a8a8a"/><path d="M2 4.5h5" stroke="#111" stroke-width="1"/></svg>
<svg class="i" style="left:88px;top:241.875px;" width="9" height="9" viewBox="0 0 9 9"><rect x="0.5" y="0.5" width="8" height="8" fill="#fff" stroke="#8a8a8a"/><path d="M2 4.5h5" stroke="#111" stroke-width="1"/></svg>
<svg class="i" style="left:107px;top:224.75px;" width="9" height="9" viewBox="0 0 9 9"><rect x="0.5" y="0.5" width="8" height="8" fill="#fff" stroke="#8a8a8a"/><path d="M2 4.5h5" stroke="#111" stroke-width="1"/><path d="M4.5 2v5" stroke="#111" stroke-width="1"/></svg>
<svg class="i" style="left:107px;top:327.5px;" width="9" height="9" viewBox="0 0 9 9"><rect x="0.5" y="0.5" width="8" height="8" fill="#fff" stroke="#8a8a8a"/><path d="M2 4.5h5" stroke="#111" stroke-width="1"/><path d="M4.5 2v5" stroke="#111" stroke-width="1"/></svg>
<svg class="i" style="left:116px;top:181px;" width="160" height="30" viewBox="0 0 160 30"><rect x="4.50" y="4.00" width="150.15" height="21.05" fill="none" stroke="#ee0c0c" stroke-width="5.5"/></svg>
<div style="left:464px;top:117px;width:1px;height:955px;background:#f6f6f6;"></div>
<div style="left:465px;top:117px;width:5px;height:955px;background:#dedede;"></div>
<div style="left:470px;top:117px;width:1px;height:955px;background:#8a8a8a;"></div>
<div style="left:471px;top:117px;width:1px;height:955px;background:#e9e9e9;"></div>
<span class="t" style="left:478.60px;top:114.42px;font-size:18.41px;line-height:26px;letter-spacing:1.029px;color:#0c0c0c;font-weight:bold;font-style:italic;">Target Environment</span>
<span class="t" style="left:485.60px;top:138.28px;font-size:12.75px;line-height:18px;letter-spacing:0.447px;color:#343434;">Use this component to enter the target for this observation.</span>
<div style="left:482px;top:161px;width:1px;height:613px;background:#fafafa;"></div>
<div style="left:482px;top:161px;width:1086px;height:1px;background:#fafafa;"></div>
<div style="left:483px;top:162px;width:1px;height:611px;background:#9a9a9a;"></div>
<div style="left:483px;top:162px;width:1084px;height:1px;background:#9a9a9a;"></div>
<div style="left:484px;top:163px;width:1083px;height:610px;background:#ededed;"></div>
<div style="left:1567px;top:161px;width:2px;height:614px;background:#9a9a9a;"></div>
<div style="left:482px;top:773px;width:1087px;height:2px;background:#8a8a8a;"></div>
<div style="left:484px;top:163px;width:1082px;height:579px;background:#ffffff;"></div>
<div style="left:1565.5px;top:163px;width:1px;height:579px;background:#b4b4b4;"></div>
<div style="left:484px;top:741.5px;width:1082px;height:1px;background:#a4a4a4;"></div>
<div style="left:484px;top:163px;width:1081px;height:18px;background:#e1e1e1;"></div>
<div style="left:484px;top:163px;width:1081px;height:1px;background:#ededed;"></div>
<div style="left:484px;top:180px;width:1081px;height:1px;background:#9c9c9c;"></div>
<div style="left:484px;top:181px;width:1081px;height:1px;background:#b0b4bc;"></div>
<div style="left:484px;top:182px;width:1081px;height:16.5px;background:#bccfe6;"></div>
<div style="left:602px;top:164px;width:1px;height:17px;background:#9a9a9a;"></div>
<div style="left:603px;top:164px;width:1px;height:16px;background:#f4f4f4;"></div>
<div style="left:602px;top:182px;width:1px;height:16.5px;background:#d2dded;"></div>
<span class="t" style="left:518.00px;top:164.08px;font-size:12.75px;line-height:18px;letter-spacing:0.000px;color:#343434;">Type Tag</span>
<span class="t" style="left:522.45px;top:182.08px;font-size:12.75px;line-height:18px;letter-spacing:0.420px;color:#343434;">Target</span>
<div style="left:702px;top:164px;width:1px;height:17px;background:#9a9a9a;"></div>
<div style="left:703px;top:164px;width:1px;height:16px;background:#f4f4f4;"></div>
<div style="left:702px;top:182px;width:1px;height:16.5px;background:#d2dded;"></div>
<span class="t" style="left:636.00px;top:164.08px;font-size:12.75px;line-height:18px;letter-spacing:0.000px;color:#343434;">Name</span>
<span class="t" style="left:604.30px;top:182.08px;font-size:12.75px;line-height:18px;letter-spacing:-0.214px;color:#343434;">NGC 6060</span>
<div style="left:822px;top:164px;width:1px;height:17px;background:#9a9a9a;"></div>
<div style="left:823px;top:164px;width:1px;height:16px;background:#f4f4f4;"></div>
<div style="left:822px;top:182px;width:1px;height:16.5px;background:#d2dded;"></div>
<span class="t" style="left:754.80px;top:164.08px;font-size:12.75px;line-height:18px;letter-spacing:-1.600px;color:#343434;">RA</span>
<span class="t" style="left:704.30px;top:182.08px;font-size:12.75px;line-height:18px;letter-spacing:0.482px;color:#343434;">16:05:51.990</span>
<div style="left:935px;top:164px;width:1px;height:17px;background:#9a9a9a;"></div>
<div style="left:936px;top:164px;width:1px;height:16px;background:#f4f4f4;"></div>
<div style="left:935px;top:182px;width:1px;height:16.5px;background:#d2dded;"></div>
<span class="t" style="left:868.35px;top:164.08px;font-size:12.75px;line-height:18px;letter-spacing:-0.350px;color:#343434;">Dec</span>
<span class="t" style="left:824.30px;top:182.08px;font-size:12.75px;line-height:18px;letter-spacing:0.400px;color:#343434;">21:29:05.77</span>
<div style="left:999px;top:164px;width:1px;height:17px;background:#9a9a9a;"></div>
<div style="left:1000px;top:164px;width:1px;height:16px;background:#f4f4f4;"></div>
<div style="left:999px;top:182px;width:1px;height:16.5px;background:#d2dded;"></div>
<span class="t" style="left:957.00px;top:164.08px;font-size:12.75px;line-height:18px;letter-spacing:0.000px;color:#343434;">Dist</span>
<div style="left:1066px;top:164px;width:1px;height:17px;background:#9a9a9a;"></div>
<div style="left:1067px;top:164px;width:1px;height:16px;background:#f4f4f4;"></div>
<div style="left:1066px;top:182px;width:1px;height:16.5px;background:#d2dded;"></div>
<span class="t" style="left:1030.09px;top:164.08px;font-size:12.75px;line-height:18px;letter-spacing:0.000px;color:#343434;">U</span>
<span class="t" style="left:1001.30px;top:182.08px;font-size:12.75px;line-height:18px;letter-spacing:0.267px;color:#343434;">0.03</span>
<div style="left:1134px;top:164px;width:1px;height:17px;background:#9a9a9a;"></div>
<div style="left:1135px;top:164px;width:1px;height:16px;background:#f4f4f4;"></div>
<div style="left:1134px;top:182px;width:1px;height:16.5px;background:#d2dded;"></div>
<span class="t" style="left:1098.08px;top:164.08px;font-size:12.75px;line-height:18px;letter-spacing:0.000px;color:#343434;">B</span>
<span class="t" style="left:1068.30px;top:182.08px;font-size:12.75px;line-height:18px;letter-spacing:0.267px;color:#343434;">0.03</span>
<div style="left:1202px;top:164px;width:1px;height:17px;background:#9a9a9a;"></div>
<div style="left:1203px;top:164px;width:1px;height:16px;background:#f4f4f4;"></div>
<div style="left:1202px;top:182px;width:1px;height:16.5px;background:#d2dded;"></div>
<span class="t" style="left:1165.59px;top:164.08px;font-size:12.75px;line-height:18px;letter-spacing:0.000px;color:#343434;">V</span>
<span class="t" style="left:1136.30px;top:182.08px;font-size:12.75px;line-height:18px;letter-spacing:0.267px;color:#343434;">0.03</span>
<div style="left:1269.5px;top:164px;width:1px;height:17px;background:#9a9a9a;"></div>
<div style="left:1270.5px;top:164px;width:1px;height:16px;background:#f4f4f4;"></div>
<div style="left:1269.5px;top:182px;width:1px;height:16.5px;background:#d2dded;"></div>
<span class="t" style="left:1233.83px;top:164.08px;font-size:12.75px;line-height:18px;letter-spacing:0.000px;color:#343434;">R</span>
<span class="t" style="left:1204.30px;top:182.08px;font-size:12.75px;line-height:18px;letter-spacing:0.267px;color:#343434;">0.07</span>
<div style="left:1330px;top:164px;width:1px;height:17px;background:#9a9a9a;"></div>
<div style="left:1331px;top:164px;width:1px;height:16px;background:#f4f4f4;"></div>
<div style="left:1330px;top:182px;width:1px;height:16.5px;background:#d2dded;"></div>
<span class="t" style="left:1299.79px;top:164.08px;font-size:12.75px;line-height:18px;letter-spacing:0.000px;color:#343434;">I</span>
<span class="t" style="left:1271.80px;top:182.08px;font-size:12.75px;line-height:18px;letter-spacing:0.310px;color:#343434;">0.1</span>
<div style="left:1409px;top:164px;width:1px;height:17px;background:#9a9a9a;"></div>
<div style="left:1410px;top:164px;width:1px;height:16px;background:#f4f4f4;"></div>
<div style="left:1409px;top:182px;width:1px;height:16.5px;background:#d2dded;"></div>
<span class="t" style="left:1369.05px;top:164.08px;font-size:12.75px;line-height:18px;letter-spacing:0.000px;color:#343434;">J</span>
<span class="t" style="left:1332.30px;top:182.08px;font-size:12.75px;line-height:18px;letter-spacing:0.444px;color:#343434;">-0.177</span>
<div style="left:1488px;top:164px;width:1px;height:17px;background:#9a9a9a;"></div>
<div style="left:1489px;top:164px;width:1px;height:16px;background:#f4f4f4;"></div>
<div style="left:1488px;top:182px;width:1px;height:16.5px;background:#d2dded;"></div>
<span class="t" style="left:1446.09px;top:164.08px;font-size:12.75px;line-height:18px;letter-spacing:0.000px;color:#343434;">H</span>
<span class="t" style="left:1411.30px;top:182.08px;font-size:12.75px;line-height:18px;letter-spacing:0.444px;color:#343434;">-0.029</span>
<div style="left:1565px;top:164px;width:1px;height:17px;background:#9a9a9a;"></div>
<span class="t" style="left:1524.69px;top:164.08px;font-size:12.75px;line-height:18px;letter-spacing:0.000px;color:#343434;">K</span>
<span class="t" style="left:1490.30px;top:182.08px;font-size:12.75px;line-height:18px;letter-spacing:0.330px;color:#343434;">0.129</span>
<div style="left:485px;top:745px;width:41px;height:26px;background:#e3e3e3;border:1px solid;border-color:#fbfbfb #7e7e7e #7e7e7e #fbfbfb"></div>
<span class="t" style="left:493.00px;top:749.58px;font-size:12.75px;line-height:18px;letter-spacing:-0.600px;color:#343434;">New</span>
<svg class="i" style="left:532.5px;top:752px;" width="12" height="12" viewBox="0 0 12 12"><path d="M2.2 2.2l7.6 7.6m0-7.6l-7.6 7.6" stroke="#9a9a9a" stroke-width="3.5" stroke-linecap="round"/></svg>
<svg class="i" style="left:568px;top:751px;" width="14" height="14.5" viewBox="0 0 14 14.5"><path d="M0.5 2.5h6.5v11h-6.5z" fill="#f3ecd2" stroke="#b0a47c" stroke-width="1"/><path d="M4.5 0.5h6l3 3v10.8h-9z" fill="#eef3fb" stroke="#8ea0c0" stroke-width="1"/>
<path d="M6.2 4.6h3.2M6.2 6.6h5.6M6.2 8.6h5.6M6.2 10.6h5.6M6.2 12.4h4" stroke="#4a6ab4" stroke-width="1"/><path d="M1.6 4.5h2M1.6 6.5h2M1.6 8.5h2" stroke="#6a86c2" stroke-width="1"/></svg>
<svg class="i" style="left:597px;top:750.5px;" width="13" height="14.5" viewBox="0 0 13 14.5"><rect x="0.5" y="2.5" width="11" height="11.5" rx="1" fill="#eec98a" stroke="#b08a4a" stroke-width="1"/><rect x="3" y="0.6" width="6" height="3.4" rx="1" fill="#8c98b0" stroke="#5c6880" stroke-width="0.8"/>
<path d="M5.5 6.5h5l2 2v5.8h-7z" fill="#f4f7fc" stroke="#8ea0c0" stroke-width="1"/><path d="M7 9.5h4M7 11.5h4" stroke="#6a86c2" stroke-width="1"/></svg>
<svg class="i" style="left:624px;top:750px;" width="15.5" height="15.5" viewBox="0 0 15.5 15.5"><rect x="4.2" y="4.6" width="10" height="10" rx="1" fill="#f2cc94" stroke="#c47a2c" stroke-width="1.2"/><path d="M9.3 3.6v12M3.2 9.8h12" stroke="#a8602a" stroke-width="1"/>
<rect x="0.9" y="1.3" width="10.2" height="10.2" rx="1" fill="#f8dcaa" stroke="#c06a1a" stroke-width="1.3"/><path d="M6 0v12.6M0 6.4h12.4" stroke="#8c4c1e" stroke-width="1.3"/></svg>
<svg class="i" style="left:663px;top:750px;" width="14" height="14" viewBox="0 0 14 14"><rect x="0.5" y="0.5" width="13" height="13" fill="#eeeeee" stroke="#c4c4c4" stroke-width="1"/><circle cx="3.8" cy="4.3" r="1.5" fill="none" stroke="#b4b4b4"/><circle cx="3.8" cy="9.7" r="1.5" fill="none" stroke="#b4b4b4"/><path d="M6.5 4.3h5M6.5 9.7h5" stroke="#b4b4b4" stroke-width="1"/></svg>
<div class="btn" style="left:1488px;top:747px;width:75px;height:20px"></div>
<span class="t" style="left:1494.70px;top:748.88px;font-size:12.75px;line-height:18px;letter-spacing:-0.250px;color:#343434;">Manual GS</span>
<div style="left:1579px;top:117px;width:1px;height:955px;background:#f8f8f8;"></div>
<div style="left:1582px;top:120.5px;width:18px;height:93px;background:#f6f3ef;border:1px solid #9c9c9c;border-right:none;border-radius:2px 0 0 2px;"></div>
<svg class="i" style="left:1585.5px;top:129px;" width="11" height="11" viewBox="0 0 11 11"><circle cx="5.5" cy="5.5" r="5.3" fill="#e63e52"/><path d="M3.3 3.3l4.4 4.4m0-4.4l-4.4 4.4" stroke="#fbe4e8" stroke-width="1.4"/></svg>
<span class="t" style="left:1581.5px;top:147px;width:18px;height:56px;font-size:13px;line-height:18px;color:#1a1a1a;writing-mode:vertical-rl;letter-spacing:0px">Problems</span>
<div style="left:481px;top:784px;width:1087px;height:1px;background:#ececec;"></div>
<div style="left:481px;top:784px;width:1px;height:273px;background:#ececec;"></div>
<div style="left:1567px;top:785px;width:1px;height:272px;background:#b0b0b0;"></div>
<div style="left:1566px;top:785px;width:1px;height:271px;background:#e9e9e9;"></div>
<div style="left:481px;top:1056px;width:1087px;height:1px;background:#b0b0b0;"></div>
<div style="left:482px;top:1055px;width:1085px;height:1px;background:#e6e6e6;"></div>
<div class="cmb" style="left:492px;top:795px;width:79px;height:22px;background:#e2e2e2;border-color:#b0b0b0"></div>
<span class="t" style="left:496.20px;top:798.08px;font-size:12.75px;line-height:18px;letter-spacing:0.400px;color:#b2b2b2;">Target</span>
<svg class="i" style="left:559px;top:804.5px;" width="8" height="4" viewBox="0 0 8 4"><path d="M0 0h8l-4 4z" fill="#b0b0b0"/></svg>
<div class="cmb" style="left:492px;top:825.5px;width:79px;height:19.5px"></div>
<span class="t" style="left:494.40px;top:826.08px;font-size:12.75px;line-height:18px;letter-spacing:-0.600px;color:#343434;">J2000</span>
<svg class="i" style="left:559.5px;top:834.5px;" width="8" height="4.5" viewBox="0 0 8 4.5"><path d="M0 0h8l-4 4.5z" fill="#111"/></svg>
<span class="t" style="left:581.60px;top:797.48px;font-size:12.75px;line-height:18px;letter-spacing:-0.200px;color:#343434;">Name</span>
<div class="fld" style="left:620px;top:795px;width:213.5px;height:22px"></div>
<span class="t" style="left:623.50px;top:796.98px;font-size:12.75px;line-height:18px;letter-spacing:-0.214px;color:#343434;">NGC 6060</span>
<svg class="i" style="left:841.5px;top:799.5px;" width="15" height="15" viewBox="0 0 15 15"><circle cx="5.6" cy="5.6" r="4.6" fill="#f8f8f8" stroke="#a8a8a8" stroke-width="1.3"/><path d="M9 9l4.6 4.4" stroke="#7c5a4a" stroke-width="2.2" stroke-linecap="round"/></svg>
<span class="t" style="left:600.20px;top:824.28px;font-size:12.75px;line-height:18px;letter-spacing:-1.600px;color:#343434;">RA</span>
<div class="fld" style="left:621px;top:823px;width:102.5px;height:20px"></div>
<span class="t" style="left:623.80px;top:824.28px;font-size:12.75px;line-height:18px;letter-spacing:0.420px;color:#343434;">16:05:51.99</span>
<span class="t" style="left:729.70px;top:825.08px;font-size:12.75px;line-height:18px;letter-spacing:-0.750px;color:#343434;">Dec</span>
<div class="fld" style="left:757px;top:823px;width:102px;height:20px"></div>
<span class="t" style="left:760.40px;top:824.28px;font-size:12.75px;line-height:18px;letter-spacing:0.482px;color:#343434;">+21:29:05.77</span>
<svg class="i" style="left:572px;top:783px;" width="305" height="71" viewBox="0 0 305 71"><rect x="4.40" y="4.30" width="295.50" height="61.50" fill="none" stroke="#f012d6" stroke-width="5.4"/></svg>
<span class="t" style="left:889.60px;top:790.27px;font-size:20px;line-height:28px;letter-spacing:0.971px;color:#f520e0;">Enter SIMBAD designation or fill in</span>
<span class="t" style="left:889.60px;top:813.87px;font-size:20px;line-height:28px;letter-spacing:1.180px;color:#f520e0;">coordinates</span>
<span class="t" style="left:496.70px;top:862.08px;font-size:12.75px;line-height:18px;letter-spacing:0.256px;color:#343434;">Brightness</span>
<svg class="i" style="left:504.5px;top:892.0px;" width="9.5" height="9.5" viewBox="0 0 9.5 9.5"><path d="M1.6 1.6l6.3 6.3m0-6.3l-6.3 6.3" stroke="#e2364e" stroke-width="2.9" stroke-linecap="round"/></svg>
<div class="fld" style="left:526px;top:887.0px;width:56.5px;height:19.5px"></div>
<span class="t" style="left:529.40px;top:887.88px;font-size:12.75px;line-height:18px;letter-spacing:0.367px;color:#343434;">0.03</span>
<div class="cmb" style="left:589px;top:887.0px;width:37px;height:19.5px"></div>
<span class="t" style="left:591.80px;top:887.88px;font-size:12.75px;line-height:18px;letter-spacing:0.000px;color:#343434;">U</span>
<svg class="i" style="left:615px;top:895.0px;" width="8" height="4.5" viewBox="0 0 8 4.5"><path d="M0 0h8l-4 4.5z" fill="#111"/></svg>
<div class="cmb" style="left:631px;top:887.0px;width:51.5px;height:19.5px"></div>
<span class="t" style="left:633.80px;top:887.88px;font-size:12.75px;line-height:18px;letter-spacing:0.200px;color:#343434;">Vega</span>
<svg class="i" style="left:672px;top:895.0px;" width="8" height="4.5" viewBox="0 0 8 4.5"><path d="M0 0h8l-4 4.5z" fill="#111"/></svg>
<svg class="i" style="left:504.5px;top:918.0px;" width="9.5" height="9.5" viewBox="0 0 9.5 9.5"><path d="M1.6 1.6l6.3 6.3m0-6.3l-6.3 6.3" stroke="#e2364e" stroke-width="2.9" stroke-linecap="round"/></svg>
<div class="fld" style="left:526px;top:913.0px;width:56.5px;height:19.5px"></div>
<span class="t" style="left:529.40px;top:913.88px;font-size:12.75px;line-height:18px;letter-spacing:0.367px;color:#343434;">0.03</span>
<div class="cmb" style="left:589px;top:913.0px;width:37px;height:19.5px"></div>
<span class="t" style="left:591.80px;top:913.88px;font-size:12.75px;line-height:18px;letter-spacing:0.000px;color:#343434;">B</span>
<svg class="i" style="left:615px;top:921.0px;" width="8" height="4.5" viewBox="0 0 8 4.5"><path d="M0 0h8l-4 4.5z" fill="#111"/></svg>
<div class="cmb" style="left:631px;top:913.0px;width:51.5px;height:19.5px"></div>
<span class="t" style="left:633.80px;top:913.88px;font-size:12.75px;line-height:18px;letter-spacing:0.200px;color:#343434;">Vega</span>
<svg class="i" style="left:672px;top:921.0px;" width="8" height="4.5" viewBox="0 0 8 4.5"><path d="M0 0h8l-4 4.5z" fill="#111"/></svg>
<svg class="i" style="left:504.5px;top:943.5px;" width="9.5" height="9.5" viewBox="0 0 9.5 9.5"><path d="M1.6 1.6l6.3 6.3m0-6.3l-6.3 6.3" stroke="#e2364e" stroke-width="2.9" stroke-linecap="round"/></svg>
<div class="fld" style="left:526px;top:938.5px;width:56.5px;height:19.5px"></div>
<span class="t" style="left:529.40px;top:939.38px;font-size:12.75px;line-height:18px;letter-spacing:0.367px;color:#343434;">0.03</span>
<div class="cmb" style="left:589px;top:938.5px;width:37px;height:19.5px"></div>
<span class="t" style="left:591.80px;top:939.38px;font-size:12.75px;line-height:18px;letter-spacing:0.000px;color:#343434;">V</span>
<svg class="i" style="left:615px;top:946.5px;" width="8" height="4.5" viewBox="0 0 8 4.5"><path d="M0 0h8l-4 4.5z" fill="#111"/></svg>
<div class="cmb" style="left:631px;top:938.5px;width:51.5px;height:19.5px"></div>
<span class="t" style="left:633.80px;top:939.38px;font-size:12.75px;line-height:18px;letter-spacing:0.200px;color:#343434;">Vega</span>
<svg class="i" style="left:672px;top:946.5px;" width="8" height="4.5" viewBox="0 0 8 4.5"><path d="M0 0h8l-4 4.5z" fill="#111"/></svg>
<svg class="i" style="left:504.5px;top:969.0px;" width="9.5" height="9.5" viewBox="0 0 9.5 9.5"><path d="M1.6 1.6l6.3 6.3m0-6.3l-6.3 6.3" stroke="#e2364e" stroke-width="2.9" stroke-linecap="round"/></svg>
<div class="fld" style="left:526px;top:964.0px;width:56.5px;height:19.5px"></div>
<span class="t" style="left:529.40px;top:964.88px;font-size:12.75px;line-height:18px;letter-spacing:0.367px;color:#343434;">0.07</span>
<div class="cmb" style="left:589px;top:964.0px;width:37px;height:19.5px"></div>
<span class="t" style="left:591.80px;top:964.88px;font-size:12.75px;line-height:18px;letter-spacing:0.000px;color:#343434;">R</span>
<svg class="i" style="left:615px;top:972.0px;" width="8" height="4.5" viewBox="0 0 8 4.5"><path d="M0 0h8l-4 4.5z" fill="#111"/></svg>
<div class="cmb" style="left:631px;top:964.0px;width:51.5px;height:19.5px"></div>
<span class="t" style="left:633.80px;top:964.88px;font-size:12.75px;line-height:18px;letter-spacing:0.200px;color:#343434;">Vega</span>
<svg class="i" style="left:672px;top:972.0px;" width="8" height="4.5" viewBox="0 0 8 4.5"><path d="M0 0h8l-4 4.5z" fill="#111"/></svg>
<svg class="i" style="left:504.5px;top:995.0px;" width="9.5" height="9.5" viewBox="0 0 9.5 9.5"><path d="M1.6 1.6l6.3 6.3m0-6.3l-6.3 6.3" stroke="#e2364e" stroke-width="2.9" stroke-linecap="round"/></svg>
<div class="fld" style="left:526px;top:990.0px;width:56.5px;height:19.5px"></div>
<span class="t" style="left:529.40px;top:990.88px;font-size:12.75px;line-height:18px;letter-spacing:0.310px;color:#343434;">0.1</span>
<div class="cmb" style="left:589px;top:990.0px;width:37px;height:19.5px"></div>
<span class="t" style="left:592.60px;top:990.88px;font-size:12.75px;line-height:18px;letter-spacing:0.000px;color:#343434;">I</span>
<svg class="i" style="left:615px;top:998.0px;" width="8" height="4.5" viewBox="0 0 8 4.5"><path d="M0 0h8l-4 4.5z" fill="#111"/></svg>
<div class="cmb" style="left:631px;top:990.0px;width:51.5px;height:19.5px"></div>
<span class="t" style="left:633.80px;top:990.88px;font-size:12.75px;line-height:18px;letter-spacing:0.200px;color:#343434;">Vega</span>
<svg class="i" style="left:672px;top:998.0px;" width="8" height="4.5" viewBox="0 0 8 4.5"><path d="M0 0h8l-4 4.5z" fill="#111"/></svg>
<svg class="i" style="left:504.5px;top:1020.5px;" width="9.5" height="9.5" viewBox="0 0 9.5 9.5"><path d="M1.6 1.6l6.3 6.3m0-6.3l-6.3 6.3" stroke="#e2364e" stroke-width="2.9" stroke-linecap="round"/></svg>
<div class="fld" style="left:526px;top:1015.5px;width:56.5px;height:19.5px"></div>
<span class="t" style="left:530.00px;top:1016.38px;font-size:12.75px;line-height:18px;letter-spacing:0.444px;color:#343434;">-0.177</span>
<div class="cmb" style="left:589px;top:1015.5px;width:37px;height:19.5px"></div>
<span class="t" style="left:590.60px;top:1016.38px;font-size:12.75px;line-height:18px;letter-spacing:0.000px;color:#343434;">J</span>
<svg class="i" style="left:615px;top:1023.5px;" width="8" height="4.5" viewBox="0 0 8 4.5"><path d="M0 0h8l-4 4.5z" fill="#111"/></svg>
<div class="cmb" style="left:631px;top:1015.5px;width:51.5px;height:19.5px"></div>
<span class="t" style="left:633.80px;top:1016.38px;font-size:12.75px;line-height:18px;letter-spacing:0.200px;color:#343434;">Vega</span>
<svg class="i" style="left:672px;top:1023.5px;" width="8" height="4.5" viewBox="0 0 8 4.5"><path d="M0 0h8l-4 4.5z" fill="#111"/></svg>
<div style="left:526px;top:1041px;width:57px;height:1px;background:#9a9a9a;"></div>
<div style="left:589px;top:1041px;width:37px;height:1px;background:#9a9a9a;"></div>
<div style="left:631px;top:1041px;width:52px;height:1px;background:#9a9a9a;"></div>
<div style="left:685px;top:882px;width:15.5px;height:159px;background:#e4e4e4;border:1px solid #9e9e9e;"></div>
<div style="left:685px;top:882px;width:15.5px;height:14px;background:#e9e9e9;border:1px solid #9e9e9e;"></div>
<svg class="i" style="left:689px;top:887px;" width="8" height="4.5" viewBox="0 0 8 4.5"><path d="M0 4.5h8l-4-4.5z" fill="#111"/></svg>
<div style="left:685px;top:1026px;width:15.5px;height:15px;background:#e9e9e9;border:1px solid #9e9e9e;"></div>
<svg class="i" style="left:689px;top:1032px;" width="8" height="4.5" viewBox="0 0 8 4.5"><path d="M0 0h8l-4 4.5z" fill="#111"/></svg>
<svg class="i" style="left:685px;top:896px;" width="15" height="84" viewBox="0 0 15 84"><defs><pattern id="bp" width="4" height="4" patternUnits="userSpaceOnUse"><rect width="4" height="4" fill="#c9dcf3"/><rect x="0" y="0" width="1" height="1" fill="#4c586c"/><rect x="2" y="2" width="1" height="1" fill="#4c586c"/><rect x="1" y="1" width="1" height="1" fill="#fff"/><rect x="3" y="3" width="1" height="1" fill="#fff"/></pattern></defs><rect x="0.5" y="0.5" width="14.5" height="83" fill="#c9dcf3" stroke="#1c2230" stroke-width="1"/><rect x="3" y="3" width="9.5" height="78" fill="url(#bp)"/></svg>
<span class="t" style="left:739.00px;top:861.58px;font-size:12.75px;line-height:18px;letter-spacing:0.275px;color:#343434;">Proper Motion</span>
<span class="t" style="left:755.60px;top:887.88px;font-size:12.75px;line-height:18px;letter-spacing:-1.600px;color:#343434;">RA</span>
<span class="t" style="left:748.40px;top:913.68px;font-size:12.75px;line-height:18px;letter-spacing:-0.230px;color:#343434;">Dec</span>
<div class="fld" style="left:776px;top:887.2px;width:57px;height:19.5px"></div>
<div class="fld" style="left:776px;top:912.8px;width:57px;height:19.5px"></div>
<span class="t" style="left:779.20px;top:888.08px;font-size:12.75px;line-height:18px;letter-spacing:0.220px;color:#343434;">200.94</span>
<span class="t" style="left:779.20px;top:913.68px;font-size:12.75px;line-height:18px;letter-spacing:0.220px;color:#343434;">286.23</span>
<span class="t" style="left:838.80px;top:888.08px;font-size:12.75px;line-height:18px;letter-spacing:0.071px;color:#343434;">mas/year</span>
<span class="t" style="left:838.80px;top:913.68px;font-size:12.75px;line-height:18px;letter-spacing:0.071px;color:#343434;">mas/year</span>
<span class="t" style="left:739.00px;top:955.58px;font-size:12.75px;line-height:18px;letter-spacing:0.375px;color:#343434;">Telescope</span>
<span class="t" style="left:764.30px;top:981.88px;font-size:12.75px;line-height:18px;letter-spacing:0.291px;color:#343434;">Rotator Mode</span>
<span class="t" style="left:748.40px;top:1005.68px;font-size:12.75px;line-height:18px;letter-spacing:0.238px;color:#343434;">Telescope Mode</span>
<div class="cmb" style="left:850px;top:981.5px;width:82.5px;height:19.5px"></div>
<span class="t" style="left:852.90px;top:981.88px;font-size:12.75px;line-height:18px;letter-spacing:0.271px;color:#343434;">Position</span>
<svg class="i" style="left:922px;top:989px;" width="8" height="4.5" viewBox="0 0 8 4.5"><path d="M0 0h8l-4 4.5z" fill="#111"/></svg>
<span class="t" style="left:947.60px;top:981.88px;font-size:12.75px;line-height:18px;letter-spacing:-0.025px;color:#343434;">Angle</span>
<div class="fld" style="left:1018.7px;top:980.5px;width:75px;height:20px"></div>
<span class="t" style="left:1021.70px;top:982.08px;font-size:12.75px;line-height:18px;letter-spacing:0.400px;color:#343434;">0.0</span>
<span class="t" style="left:1100.50px;top:982.08px;font-size:12.75px;line-height:18px;letter-spacing:-0.014px;color:#343434;">° E of N</span>
<div class="cmb" style="left:850px;top:1007px;width:163px;height:19.5px"></div>
<span class="t" style="left:852.90px;top:1007.58px;font-size:12.75px;line-height:18px;letter-spacing:-0.180px;color:#343434;">Active</span>
<svg class="i" style="left:1002.5px;top:1014.5px;" width="8" height="4.5" viewBox="0 0 8 4.5"><path d="M0 0h8l-4 4.5z" fill="#111"/></svg>
<svg class="i" style="left:723px;top:948px;" width="440" height="95" viewBox="0 0 440 95"><rect x="4.30" y="4.40" width="430.10" height="85.50" fill="none" stroke="#0e6e12" stroke-width="5.8"/></svg>
<span class="t" style="left:1171.00px;top:965.77px;font-size:20px;line-height:28px;letter-spacing:1.012px;color:#177a1c;">Enter Position Angle and Telescope</span>
<span class="t" style="left:1171.00px;top:989.17px;font-size:20px;line-height:28px;letter-spacing:0.867px;color:#177a1c;">Mode</span>
<span class="t" style="left:256.00px;top:1069.08px;font-size:12.75px;line-height:18px;letter-spacing:0.321px;color:#444;">All libraries loaded: default field block table</span>
<span class="t" style="left:530.00px;top:1069.08px;font-size:12.75px;line-height:18px;letter-spacing:0.294px;color:#555;">field    label    link    table    block    hold    default    list</span>
</body></html>
